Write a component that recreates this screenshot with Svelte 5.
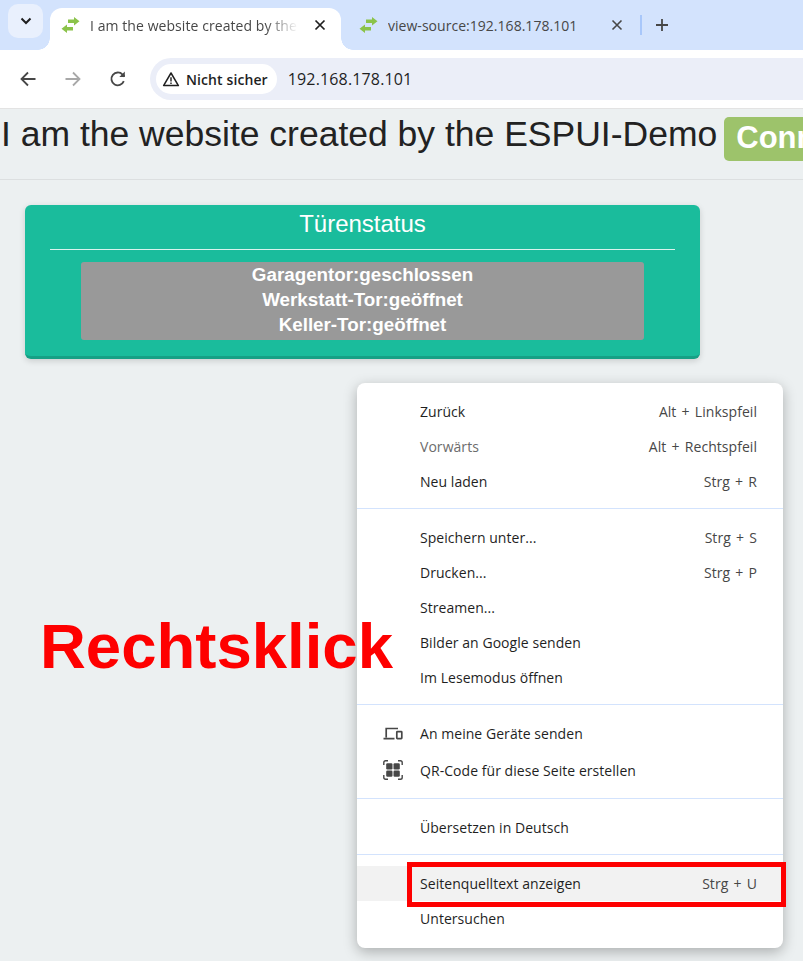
<script>
  const groups = [
    [
      { label: 'Zurück', key: 'Alt + Linkspfeil' },
      { label: 'Vorwärts', key: 'Alt + Rechtspfeil', dim: true },
      { label: 'Neu laden', key: 'Strg + R' }
    ],
    [
      { label: 'Speichern unter...', key: 'Strg + S' },
      { label: 'Drucken...', key: 'Strg + P' },
      { label: 'Streamen...' },
      { label: 'Bilder an Google senden' },
      { label: 'Im Lesemodus öffnen' }
    ],
    [
      { label: 'An meine Geräte senden', icon: 'devices' },
      { label: 'QR-Code für diese Seite erstellen', icon: 'qr', tall: true }
    ],
    [{ label: 'Übersetzen in Deutsch' }],
    [
      { label: 'Seitenquelltext anzeigen', key: 'Strg + U', active: true },
      { label: 'Untersuchen' }
    ]
  ];
</script>

{#snippet favicon()}
  <svg class="fav" width="19" height="16" viewBox="0 0 19 16">
    <path d="M7 2.5H13V0L18.5 4.3L13 8.6V6H7Z" fill="#8bc34a" />
    <path d="M12 10H6V7.4L0.5 11.7L6 16V13.5H12Z" fill="#8bc34a" />
  </svg>
{/snippet}

<div class="window">
  <header class="tabstrip">
    <button class="tabsearch" aria-label="Tabs suchen">
      <svg width="12" height="8" viewBox="0 0 12 8"><path d="M1.5 1.5L6 6L10.5 1.5" fill="none" stroke="#1f1f1f" stroke-width="2" /></svg>
    </button>
    <div class="tab active">
      {@render favicon()}
      <span class="tabtitle">I am the website created by the ESPUI-Demo</span>
      <svg class="close" width="12" height="12" viewBox="0 0 12 12"><path d="M1.5 1.5L10.5 10.5M10.5 1.5L1.5 10.5" stroke="#1f1f1f" stroke-width="1.7" /></svg>
    </div>
    <div class="tab second">
      {@render favicon()}
      <span class="tabtitle plain">view-source:192.168.178.101</span>
      <svg class="close" width="12" height="12" viewBox="0 0 12 12"><path d="M1.5 1.5L10.5 10.5M10.5 1.5L1.5 10.5" stroke="#474747" stroke-width="1.6" /></svg>
    </div>
    <span class="tabsep"></span>
    <svg class="plus" width="14" height="14" viewBox="0 0 14 14"><path d="M7 1V13M1 7H13" stroke="#474747" stroke-width="1.8" /></svg>
  </header>

  <nav class="toolbar">
    <svg class="navicon" width="18" height="18" viewBox="0 0 18 18"><path d="M16.5 9H3M9 2.5L2.5 9L9 15.5" fill="none" stroke="#474747" stroke-width="1.8" /></svg>
    <svg class="navicon" width="18" height="18" viewBox="0 0 18 18"><path d="M1.5 9H15M9 2.5L15.5 9L9 15.5" fill="none" stroke="#a8a8a8" stroke-width="1.8" /></svg>
    <svg class="navicon" width="18" height="18" viewBox="0 0 18 18"><path d="M14.8 11.2A6.4 6.4 0 1 1 13.6 4.6L15.5 6.5" fill="none" stroke="#474747" stroke-width="1.8" /><path d="M15.8 1.5V7H10.3Z" fill="#474747" /></svg>
    <div class="omnibox">
      <div class="chip">
        <svg width="18" height="16" viewBox="0 0 18 16"><path d="M9 2L16.4 14.6H1.6Z" fill="none" stroke="#1f1f1f" stroke-width="1.5" stroke-linejoin="round" /><path d="M9 6.2V10.6M9 11.4V13" stroke="#1f1f1f" stroke-width="1.4" /></svg>
        <span>Nicht sicher</span>
      </div>
      <span class="url">192.168.178.101</span>
    </div>
  </nav>

  <main class="page">
    <div class="heading">
      <h1><span>I am the website created by the ESPUI-Demo</span><span class="label">Connected</span></h1>
    </div>
    <section class="card">
      <h2>Türenstatus</h2>
      <hr />
      <div class="status">
        Garagentor:geschlossen<br />Werkstatt-Tor:geöffnet<br />Keller-Tor:geöffnet
      </div>
    </section>
  </main>

  <div class="menu">
    {#each groups as group, g}
      {#if g > 0}<div class="sep"></div>{/if}
      {#each group as item}
        <div class="item" class:dim={item.dim} class:active={item.active} class:tall={item.tall}>
          {#if item.icon === 'devices'}
            <svg class="micon" width="20" height="14" viewBox="0 0 20 14"><path d="M3.2 10.5V1.5H15M0.5 11.7H11.5" fill="none" stroke="#474747" stroke-width="1.7" /><rect x="13.8" y="4.6" width="5" height="7" rx="0.6" fill="none" stroke="#474747" stroke-width="1.7" /></svg>
          {:else if item.icon === 'qr'}
            <svg class="micon" width="20" height="20" viewBox="0 0 20 20"><path d="M0.8 5V2.6Q0.8 0.8 2.6 0.8H5M15 0.8H17.4Q19.2 0.8 19.2 2.6V5M19.2 15V17.4Q19.2 19.2 17.4 19.2H15M5 19.2H2.6Q0.8 19.2 0.8 17.4V15" fill="none" stroke="#474747" stroke-width="1.4" /><rect x="3.2" y="3.2" width="6.3" height="6.3" rx="1.2" fill="#474747" /><rect x="10.5" y="3.2" width="6.3" height="6.3" rx="1.2" fill="#474747" /><rect x="3.2" y="10.5" width="6.3" height="6.3" rx="1.2" fill="#474747" /><rect x="10.5" y="10.5" width="6.3" height="6.3" rx="1.2" fill="#474747" /></svg>
          {/if}
          <span class="mlabel">{item.label}</span>
          {#if item.key}<span class="mkey">{item.key}</span>{/if}
        </div>
      {/each}
    {/each}
  </div>

  <div class="rechtsklick">Rechtsklick</div>
  <div class="redbox"></div>
</div>

<style>
  :global(body) {
    margin: 0;
    background: #ecf0f1;
  }
  .window {
    position: relative;
    width: 803px;
    height: 961px;
    overflow: hidden;
    font-family: "Open Sans", "Noto Sans", sans-serif;
    color: #1f1f1f;
  }
  .tabstrip {
    display: flex;
    align-items: center;
    height: 50px;
    background: #d3e3fd;
    box-sizing: border-box;
    position: relative;
  }
  .tabsearch {
    width: 35px;
    height: 34px;
    margin: 0 0 8px 8px;
    padding: 0;
    border: 0;
    border-radius: 10px;
    background: #e9f0fd;
    display: flex;
    align-items: center;
    justify-content: center;
  }
  .tab {
    display: flex;
    align-items: center;
    height: 42px;
    box-sizing: border-box;
    margin-top: 8px;
    padding-bottom: 8px;
    position: relative;
  }
  .tab.active {
    width: 291px;
    margin-left: 7px;
    padding-left: 11px;
    background: #fff;
    border-radius: 12px 12px 0 0;
  }
  .tab.active::before,
  .tab.active::after {
    content: "";
    position: absolute;
    bottom: 0;
    width: 12px;
    height: 12px;
  }
  .tab.active::before {
    left: -12px;
    background: radial-gradient(circle at 0 0, #d3e3fd 11.5px, #fff 12px);
  }
  .tab.active::after {
    right: -12px;
    background: radial-gradient(circle at 100% 0, #d3e3fd 11.5px, #fff 12px);
  }
  .fav {
    flex: none;
  }
  .tabtitle {
    display: block;
    margin-left: 10px;
    width: 208px;
    flex: none;
    overflow: hidden;
    white-space: nowrap;
    font-size: 14px;
    letter-spacing: 0.07px;
    color: #474747;
    -webkit-mask-image: linear-gradient(to right, #000 175px, transparent 208px);
    mask-image: linear-gradient(to right, #000 175px, transparent 208px);
  }
  .tabtitle.plain {
    width: 200px;
    letter-spacing: 0.03px;
    -webkit-mask-image: none;
    mask-image: none;
  }
  .tab.active .close {
    margin-left: 16px;
  }
  .tab.second {
    margin-left: 18px;
    width: 275px;
  }
  .tab.second .close {
    margin-left: 23px;
  }
  .tabsep {
    width: 2px;
    height: 20px;
    background: #a8c7fa;
    position: absolute;
    left: 640px;
    top: 15px;
  }
  .plus {
    position: absolute;
    left: 655px;
    top: 18px;
  }
  .toolbar {
    display: flex;
    align-items: center;
    height: 59px;
    box-sizing: border-box;
    border-bottom: 1px solid #e3e3e3;
    background: #fff;
    padding-left: 19px;
  }
  .navicon {
    flex: none;
    margin-right: 27px;
  }
  .navicon:nth-of-type(3) {
    margin-right: 23px;
  }
  .omnibox {
    display: flex;
    align-items: center;
    flex: none;
    width: 680px;
    height: 42px;
    border-radius: 21px 0 0 21px;
    background: #ebeef8;
    padding-left: 6px;
  }
  .chip {
    display: flex;
    align-items: center;
    gap: 6px;
    height: 30px;
    padding: 0 9px 0 6px;
    border-radius: 15px;
    background: #fff;
    font-size: 14px;
    font-weight: 600;
    letter-spacing: 0.1px;
  }
  .url {
    margin-left: 11px;
    font-size: 16px;
    letter-spacing: 0.15px;
  }
  .page {
    background: #ecf0f1;
    height: 852px;
  }
  .heading {
    height: 71px;
    box-sizing: border-box;
    border-bottom: 1px solid #dcdfe0;
    white-space: nowrap;
    overflow: hidden;
  }
  h1 {
    display: flex;
    align-items: flex-start;
    gap: 7px;
    margin: 0;
    padding-left: 1px;
    font: 400 35.5px/50px "Liberation Sans", Arial, sans-serif;
    color: #222;
  }
  .label {
    flex: none;
    margin-top: 8px;
    padding: 0 12px;
    height: 44px;
    line-height: 42px;
    border-radius: 5px;
    background: #9dc36b;
    color: #fff;
    font-weight: 700;
    font-size: 31px;
  }
  .card {
    margin: 25px 0 0 25px;
    width: 675px;
    height: 154px;
    box-sizing: border-box;
    padding: 0 25px;
    background: #1abc9c;
    border-bottom: 3px solid #16a085;
    border-radius: 6px;
    box-shadow: 0 2px 6px rgba(0, 0, 0, 0.15);
    font-family: "Liberation Sans", Arial, sans-serif;
    color: #fff;
    text-align: center;
  }
  h2 {
    margin: 0;
    height: 37px;
    font-weight: 400;
    font-size: 24px;
    line-height: 37px;
  }
  hr {
    margin: 7px 0 12px;
    padding: 0;
    border: 0;
    height: 1px;
    background: #d9f3ee;
  }
  .status {
    margin: 0 31px;
    height: 78px;
    background: #999;
    border-radius: 3px;
    font-weight: 700;
    font-size: 18.8px;
    line-height: 25px;
    box-sizing: border-box;
  }
  .rechtsklick {
    position: absolute;
    left: 40px;
    top: 608px;
    font: 700 63.5px/76px "Liberation Sans", Arial, sans-serif;
    color: #fe0000;
    white-space: nowrap;
  }
  .menu {
    position: absolute;
    left: 357px;
    top: 383px;
    width: 426px;
    height: 565px;
    box-sizing: border-box;
    padding-top: 11px;
    background: #fff;
    border-radius: 8px;
    box-shadow: 0 4px 14px rgba(0, 0, 0, 0.28);
    font-size: 14px;
    letter-spacing: 0.05px;
  }
  .item {
    position: relative;
    display: flex;
    align-items: center;
    justify-content: space-between;
    height: 35px;
    padding: 0 26px 0 63px;
    color: #1f1f1f;
  }
  .item.tall {
    height: 38px;
  }
  .item.dim {
    color: #6c6c6c;
  }
  .item.active {
    background: #f2f2f2;
  }
  .mkey {
    color: #474747;
    word-spacing: 1.5px;
  }
  .micon {
    position: absolute;
    left: 26px;
    top: 50%;
    transform: translateY(-50%);
  }
  .sep {
    height: 1px;
    background: #d3e3fd;
    margin: 9px 0 11px;
  }
  .redbox {
    position: absolute;
    left: 407px;
    top: 862px;
    width: 379px;
    height: 45px;
    box-sizing: border-box;
    border: 5px solid #fe0000;
  }
</style>
